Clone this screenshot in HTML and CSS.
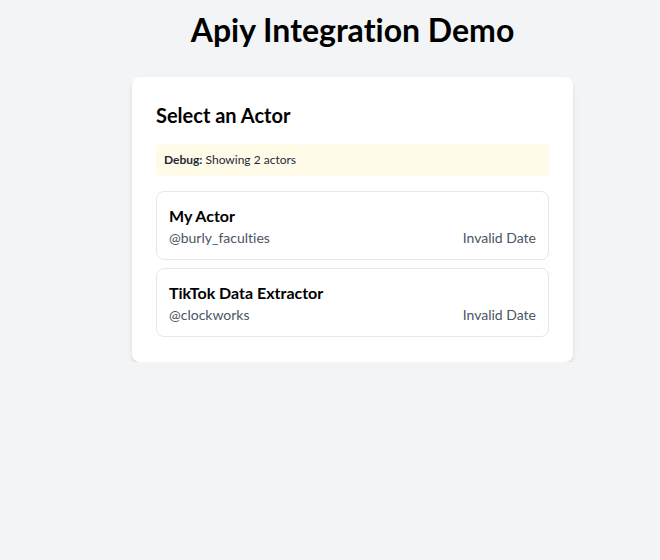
FILE: index.html
```html
<!DOCTYPE html>
<html>
<head>
<meta charset="utf-8">
<link rel="stylesheet" href="styles.css">
</head>
<body>
<main class="page">
  <h1 class="title">Apiy Integration Demo</h1>
  <section class="panel">
    <h2 class="panel-title">Select an Actor</h2>
    <div class="debug"><strong>Debug:</strong> Showing 2 actors</div>
    <div class="actor-list">
      <div class="actor">
        <div class="actor-name">My Actor</div>
        <div class="actor-meta">
          <span>@burly_faculties</span>
          <span>Invalid Date</span>
        </div>
      </div>
      <div class="actor">
        <div class="actor-name">TikTok Data Extractor</div>
        <div class="actor-meta">
          <span>@clockworks</span>
          <span>Invalid Date</span>
        </div>
      </div>
    </div>
  </section>
</main>
</body>
</html>
```
FILE: styles.css
```css
html, body {
  margin: 0;
  padding: 0;
  background: #f3f4f6;
  font-family: Lato, "Noto Sans", sans-serif;
  font-variant-ligatures: none;
  color: #000;
}
.page {
  display: flex;
  flex-direction: column;
  align-items: center;
  padding: 0 0 0 45px;
}
.title {
  font-size: 32px;
  font-weight: 700;
  line-height: 40px;
  margin: 10px 0 27px;
}
.panel {
  width: 441px;
  box-sizing: border-box;
  background: #fff;
  border-radius: 8px;
  box-shadow: 0 4px 6px -1px rgba(0,0,0,0.1), 0 2px 4px -2px rgba(0,0,0,0.1);
  padding: 24px 24px 25px;
}
.panel-title {
  font-size: 20px;
  font-weight: 700;
  line-height: 28px;
  margin: 0 0 15px;
}
.debug {
  background: #fefce8;
  border-radius: 4px;
  padding: 8px;
  font-size: 12px;
  line-height: 16px;
  color: #1f2937;
  margin-bottom: 15px;
}
.debug strong { font-weight: 700; }
.actor-list {
  display: flex;
  flex-direction: column;
  gap: 8px;
}
.actor {
  border: 1px solid #e5e7eb;
  border-radius: 8px;
  padding: 13px 12px 11px;
}
.actor-name {
  font-size: 16px;
  font-weight: 700;
  line-height: 22px;
}
.actor-meta {
  display: flex;
  justify-content: space-between;
  margin-top: 1px;
  font-size: 14px;
  line-height: 20px;
  color: #4b5563;
}
```
